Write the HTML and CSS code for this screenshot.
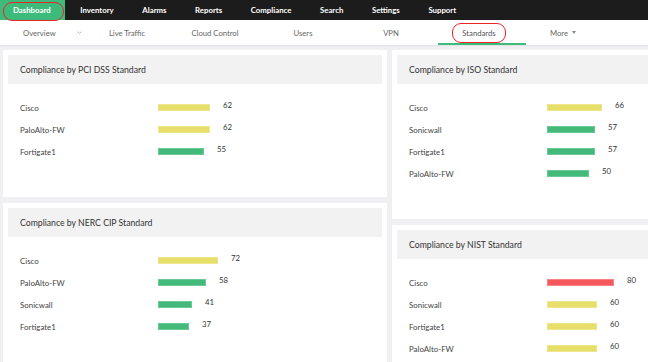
FILE: index.html
```html
<!DOCTYPE html>
<html>
<head>
<meta charset="utf-8">
<link rel="stylesheet" href="styles.css">
</head>
<body>
<nav class="topnav">
  <a class="tnav active">Dashboard</a>
  <a class="tnav">Inventory</a>
  <a class="tnav">Alarms</a>
  <a class="tnav">Reports</a>
  <a class="tnav">Compliance</a>
  <a class="tnav">Search</a>
  <a class="tnav">Settings</a>
  <a class="tnav">Support</a>
</nav>
<nav class="subnav">
  <a class="stab first">Overview <svg class="chev" width="5" height="3" viewBox="0 0 5 3"><path d="M0.5 0.5 L2.5 2.5 L4.5 0.5" fill="none" stroke="#aaa" stroke-width="0.8"/></svg></a>
  <a class="stab">Live Traffic</a>
  <a class="stab">Cloud Control</a>
  <a class="stab">Users</a>
  <a class="stab">VPN</a>
  <a class="stab current"><span class="circled">Standards</span></a>
  <a class="stab more">More <svg class="caret" width="4" height="3" viewBox="0 0 4 3"><path d="M0 0 L4 0 L2 3 Z" fill="#888"/></svg></a>
</nav>
<main class="content">
  <div class="col">
    <section class="card">
      <h2 class="card-head">Compliance by PCI DSS Standard</h2>
      <div class="card-body">
        <div class="row"><span class="label">Cisco</span><span class="bar yellow" style="width:52px"></span><span class="val">62</span></div>
        <div class="row"><span class="label">PaloAlto-FW</span><span class="bar yellow" style="width:52px"></span><span class="val">62</span></div>
        <div class="row"><span class="label">Fortigate1</span><span class="bar green" style="width:46px"></span><span class="val">55</span></div>
      </div>
    </section>
    <section class="card">
      <h2 class="card-head">Compliance by NERC CIP Standard</h2>
      <div class="card-body">
        <div class="row"><span class="label">Cisco</span><span class="bar yellow" style="width:60px"></span><span class="val">72</span></div>
        <div class="row"><span class="label">PaloAlto-FW</span><span class="bar green" style="width:48px"></span><span class="val">58</span></div>
        <div class="row"><span class="label">Sonicwall</span><span class="bar green" style="width:34px"></span><span class="val">41</span></div>
        <div class="row"><span class="label">Fortigate1</span><span class="bar green" style="width:31px"></span><span class="val">37</span></div>
      </div>
    </section>
  </div>
  <div class="col">
    <section class="card">
      <h2 class="card-head">Compliance by ISO Standard</h2>
      <div class="card-body">
        <div class="row"><span class="label">Cisco</span><span class="bar yellow" style="width:55px"></span><span class="val">66</span></div>
        <div class="row"><span class="label">Sonicwall</span><span class="bar green" style="width:48px"></span><span class="val">57</span></div>
        <div class="row"><span class="label">Fortigate1</span><span class="bar green" style="width:48px"></span><span class="val">57</span></div>
        <div class="row"><span class="label">PaloAlto-FW</span><span class="bar green" style="width:42px"></span><span class="val">50</span></div>
      </div>
    </section>
    <section class="card">
      <h2 class="card-head">Compliance by NIST Standard</h2>
      <div class="card-body">
        <div class="row"><span class="label">Cisco</span><span class="bar red" style="width:67px"></span><span class="val">80</span></div>
        <div class="row"><span class="label">Sonicwall</span><span class="bar yellow" style="width:50px"></span><span class="val">60</span></div>
        <div class="row"><span class="label">Fortigate1</span><span class="bar yellow" style="width:50px"></span><span class="val">60</span></div>
        <div class="row"><span class="label">PaloAlto-FW</span><span class="bar yellow" style="width:50px"></span><span class="val">60</span></div>
      </div>
    </section>
  </div>
</main>
</body>
</html>
```

FILE: styles.css
```css
* { box-sizing: border-box; }
html, body { margin: 0; padding: 0; }
body {
  width: 648px;
  height: 362px;
  overflow: hidden;
  background: #f0f0f2;
  font-family: Lato, "Liberation Sans", sans-serif;
  color: #333;
}
.topnav {
  display: flex;
  height: 20px;
  background: #1c1c1c;
}
.tnav {
  display: flex;
  align-items: center;
  padding: 0 14.3px;
  color: #fff;
  font-weight: 700;
  font-size: 7.8px;
}
.tnav.active {
  position: relative;
  background: #3dbb7b;
  padding: 0 0 0 13px;
  width: 65px;
  margin-right: 1px;
}
.tnav.active::after {
  content: "";
  position: absolute;
  left: 3px;
  top: 1.5px;
  width: 59px;
  height: 17px;
  border: 1.5px solid #e6262b;
  border-radius: 9px;
}
.subnav {
  display: flex;
  height: 25px;
  background: #fff;
  box-shadow: 0 1px 1px rgba(0,0,0,0.05);
}
.stab {
  position: relative;
  display: flex;
  align-items: center;
  justify-content: center;
  width: 88px;
  padding-right: 6px;
  font-size: 7.7px;
  color: #666;
}
.stab.first {
  width: 86px;
  justify-content: flex-start;
  padding: 0 0 0 23px;
}
.chev {
  margin-left: 21px;
}
.stab.more {
  padding-right: 14px;
}
.caret {
  margin-left: 4px;
}
.stab.current {
  color: #555;
  border-bottom: 2px solid #3dbb7b;
  padding-top: 2px;
}
.circled {
  position: relative;
}
.circled::after {
  content: "";
  position: absolute;
  left: -10px;
  right: -10px;
  top: -5px;
  bottom: -5px;
  border: 1.5px solid #e6262b;
  border-radius: 9px;
}
.content {
  display: grid;
  grid-template-columns: 384px 384px;
  gap: 5px;
  padding: 5px 0 0 3px;
}
.col {
  display: flex;
  flex-direction: column;
  gap: 6px;
}
.card {
  background: #fff;
  padding: 5px;
}
.card-head {
  margin: 0;
  height: 29px;
  display: flex;
  align-items: center;
  padding-left: 12px;
  background: #f2f2f2;
  font-size: 8.7px;
  font-weight: 400;
  color: #333;
}
.card-body {
  padding: 12px 12px 30px;
}
.row {
  display: flex;
  align-items: center;
  height: 22px;
}
.label {
  width: 138px;
  font-size: 7.9px;
  color: #444;
  padding-top: 1px;
}
.bar {
  height: 7px;
  border: 1px solid;
}
.bar.yellow { background: #e8df6a; border-color: #ede68c; }
.bar.green { background: #43b97a; border-color: #6cc895; }
.bar.red { background: #f5585a; border-color: #f78384; }
.val {
  margin-left: 13px;
  margin-bottom: 5px;
  font-size: 7.8px;
  color: #333;
}
```
